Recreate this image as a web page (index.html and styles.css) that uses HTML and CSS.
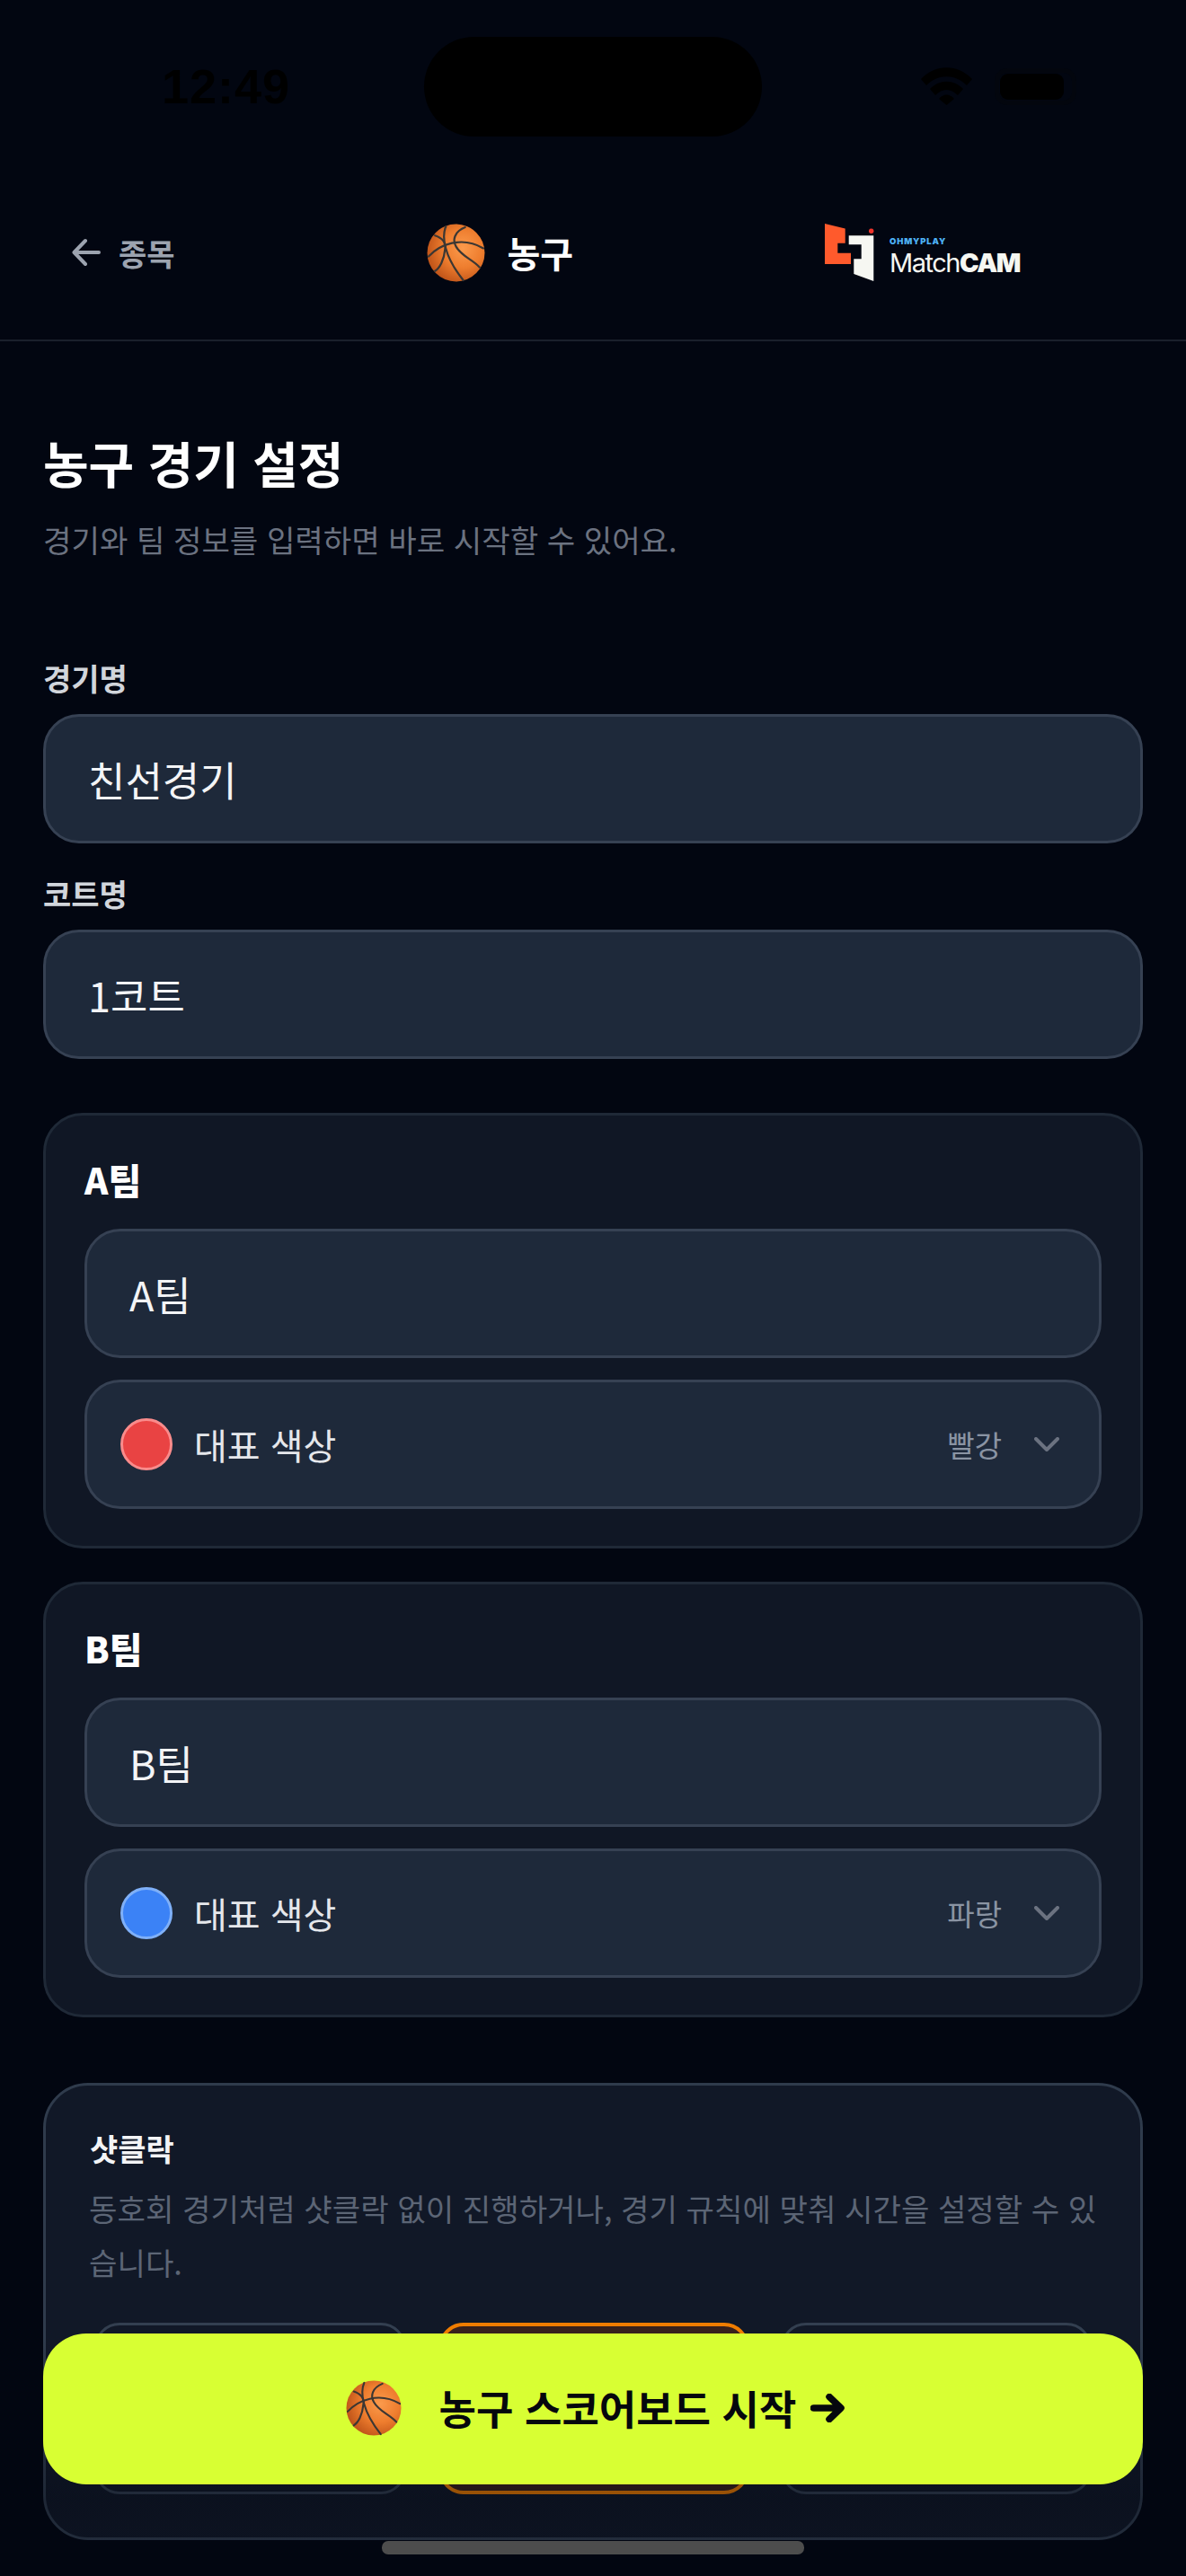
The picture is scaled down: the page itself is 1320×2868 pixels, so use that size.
FILE: index.html
```html
<!DOCTYPE html>
<html lang="ko">
<head>
<meta charset="utf-8">
<title>농구 경기 설정</title>
<link rel="stylesheet" href="styles.css">
</head>
<body>
<svg class="defs" width="0" height="0" aria-hidden="true">
  <defs>
    <radialGradient id="ballFill" cx="62%" cy="42%" r="62%">
      <stop offset="0" stop-color="#fb9a4c"/>
      <stop offset="0.55" stop-color="#ee7d2e"/>
      <stop offset="1" stop-color="#c2561a"/>
    </radialGradient>
    <symbol id="ball" viewBox="0 0 64 64">
      <circle cx="32" cy="32" r="31.5" fill="url(#ballFill)"/>
      <g fill="none" stroke="#3b3733" stroke-width="2.2" stroke-linecap="round">
        <path d="M2 36C14 23 38 13 62 27"/>
        <path d="M21 3C16 14 19 36 40 62"/>
        <path d="M9 13C18 16 21 22 20 28C19 40 14 49 9 52"/>
        <path d="M42 4C30 9 28 18 32 25C38 36 50 39 58 48"/>
      </g>
    </symbol>
  </defs>
</svg>
<div class="phone">
  <div class="status">
    <span class="time">12:49</span>
    <div class="island"></div>
    <div class="status-icons">
      <svg class="wifi" viewBox="0 0 57 42"><path d="M0 13C16-4 41-4 57 13L51 20C38 7 19 7 6 20Z"/><path d="M10 24C21 13 36 13 47 24L41 31C33 23 24 23 16 31Z"/><path d="M20 35C25 29 32 29 37 35L28.5 42Z"/></svg>
      <div class="battery"><div class="battery-fill"></div></div>
    </div>
  </div>
  <header class="topbar">
    <div class="back">
      <svg class="back-icon" viewBox="0 0 32 32"><path d="M30 16H3M15 3 2.500 16 15 29"/></svg>
      <span>종목</span>
    </div>
    <div class="sport">
      <svg class="ball-lg"><use href="#ball"/></svg>
      <span>농구</span>
    </div>
    <div class="logo">
      <svg class="logo-mark" viewBox="0 0 55 64">
        <path fill="#ff5a2c" d="M0 0 22.700 5.500V21.700H14.300V32.700H29V45H0Z"/>
        <path fill="#f6f7f2" d="M26.700 13.300H54.300V64L32.300 56V39.300H40.700V23.300H26.700Z"/>
        <circle cx="51.700" cy="8.300" r="2.700" fill="#f0342b"/>
      </svg>
      <div class="logo-text">
        <span class="logo-top">OHMYPLAY</span>
        <span class="logo-main">Match<b>CAM</b></span>
      </div>
    </div>
  </header>
  <main class="content">
    <section class="intro">
      <h1>농구 경기 설정</h1>
      <p>경기와 팀 정보를 입력하면 바로 시작할 수 있어요.</p>
    </section>
    <section class="fields">
      <label class="field-label">경기명</label>
      <div class="input">친선경기</div>
      <label class="field-label second">코트명</label>
      <div class="input">1코트</div>
    </section>
    <section class="teams">
      <div class="card">
        <h2>A팀</h2>
        <div class="input team-input">A팀</div>
        <div class="input select">
          <span class="swatch red"></span>
          <span class="select-label">대표 색상</span>
          <span class="select-value">빨강</span>
          <svg class="chevron" viewBox="0 0 28 16"><path d="M2 2 14 14 26 2"/></svg>
        </div>
      </div>
      <div class="card">
        <h2>B팀</h2>
        <div class="input team-input">B팀</div>
        <div class="input select">
          <span class="swatch blue"></span>
          <span class="select-label">대표 색상</span>
          <span class="select-value">파랑</span>
          <svg class="chevron" viewBox="0 0 28 16"><path d="M2 2 14 14 26 2"/></svg>
        </div>
      </div>
    </section>
    <section class="card clock">
      <h3>샷클락</h3>
      <p>동호회 경기처럼 샷클락 없이 진행하거나, 경기 규칙에 맞춰 시간을 설정할 수 있습니다.</p>
      <div class="options">
        <div class="option"></div>
        <div class="option active"></div>
        <div class="option"></div>
      </div>
    </section>
  </main>
  <div class="fade"></div>
  <button class="cta">
    <svg class="ball-md"><use href="#ball"/></svg>
    <span>농구 스코어보드 시작</span>
    <svg class="cta-arrow" viewBox="0 0 38 32"><path d="M3.500 16H33M21 3.500 34 16 21 28.500"/></svg>
  </button>
  <div class="home"></div>
</div>
</body>
</html>
```
FILE: styles.css
```css
* { box-sizing: border-box; margin: 0; padding: 0; }
html, body { width: 1320px; height: 2868px; overflow: hidden; background: #020611; }
body { font-family: "Noto Sans CJK KR", "Noto Sans", sans-serif; color: #fff; }
.defs { position: absolute; }
.phone { position: relative; width: 1320px; height: 2868px; overflow: hidden; background: #020611; }

.status { height: 190px; display: grid; grid-template-columns: 1fr 376px 1fr; align-items: start; padding-top: 41px; }
.time { font-family: "Liberation Sans", sans-serif; font-weight: 700; font-size: 54px; line-height: 56px; margin: 27px 0 0 180px; color: #000; letter-spacing: 1px; }
.island { height: 111px; border-radius: 56px; background: #000; }
.status-icons { display: flex; align-items: center; justify-content: flex-end; gap: 25px; margin-top: 34px; padding-right: 122px; }
.wifi { width: 57px; height: 42px; fill: #000; }
.battery { width: 91px; height: 41px; border: 5px solid #03060e; border-radius: 14px; padding: 1px; }
.battery-fill { width: 71px; height: 29px; border-radius: 9px; background: #000; }

.topbar { height: 190px; padding: 0 185px 6px 80px; display: flex; align-items: center; justify-content: space-between; border-bottom: 2px solid #1a202c; }
.back { display: flex; align-items: center; gap: 20px; color: #9ca3af; font-size: 34px; font-weight: 600; }
.back-icon { width: 32px; height: 32px; fill: none; stroke: #9ca3af; stroke-width: 4; stroke-linecap: round; stroke-linejoin: round; }
.sport { display: flex; align-items: center; gap: 25px; font-size: 40px; font-weight: 600; }
.ball-lg { width: 65px; height: 65px; }
.logo { display: flex; align-items: center; gap: 17px; }
.logo-mark { width: 55px; height: 64px; flex: none; }
.logo-text { display: flex; flex-direction: column; font-family: "Inter", sans-serif; margin-top: 12px; }
.logo-top { font-size: 9.500px; line-height: 12px; font-weight: 900; letter-spacing: 0.800px; color: #4db1f5; }
.logo-main { font-size: 29px; line-height: 36px; font-weight: 400; color: #f6f7f2; letter-spacing: -1.500px; }
.logo-main b { font-weight: 900; }

.content { padding: 0 48px; }
.intro { padding-top: 96px; }
h1 { font-size: 55px; line-height: 76px; font-weight: 700; }
.intro p { margin-top: 22px; font-size: 34.200px; line-height: 52px; color: #6b7280; }
.fields { display: flex; flex-direction: column; margin-top: 106px; }
.field-label { font-size: 34px; line-height: 46px; font-weight: 600; color: #d1d5db; margin-bottom: 17px; }
.field-label.second { margin-top: 33px; }
.input { height: 144px; border-radius: 40px; background: #1e293a; border: 3px solid #364153; display: flex; align-items: center; padding: 0 47px; font-size: 45px; color: #f3f4f6; }
.teams { display: flex; flex-direction: column; gap: 37px; margin-top: 60px; }
.card { border-radius: 44px; background: #101725; border: 3px solid #1f2937; padding: 43px 43px 41px; display: flex; flex-direction: column; }
h2 { font-size: 40px; line-height: 56px; font-weight: 800; margin-bottom: 27px; }
.team-input { margin-bottom: 24px; }
.select { padding: 0 44px 0 37px; font-size: 40px; }
.swatch { width: 58px; height: 58px; border-radius: 50%; border: 3px solid; flex: none; }
.swatch.red { background: #e94343; border-color: #f98b8b; }
.swatch.blue { background: #3b82f6; border-color: #7fb0f8; }
.select-label { margin-left: 24px; flex: 1; color: #e5e7eb; }
.select-value { font-size: 33px; color: #8a94a3; }
.chevron { width: 28px; height: 16px; margin-left: 36px; fill: none; stroke: #6b7280; stroke-width: 4; stroke-linecap: round; stroke-linejoin: round; }

.clock { margin-top: 73px; height: 509px; padding: 45px 49px; border-color: #2f3b4c; border-radius: 50px; background: #111827; }
h3 { font-size: 34px; line-height: 50px; font-weight: 700; color: #f3f4f6; }
.clock p { margin: 11px -2px 0 -1px; font-size: 34.200px; line-height: 60px; color: #5c6575; }
.options { display: grid; grid-template-columns: 347px 346px 346px; gap: 35.500px; margin: 38px 5px 0; }
.option { height: 191px; border-radius: 28px; border: 3px solid #333f50; background: #111827; }
.option.active { border: 4px solid #f07d00; background: #38211c; }

.fade { position: absolute; left: 0; right: 0; top: 2600px; height: 268px; background: linear-gradient(to bottom, rgba(2, 6, 17, 0), rgba(2, 6, 17, 0.38) 68%, rgba(2, 6, 17, 0.2)); }
.cta { position: absolute; left: 48px; top: 2598px; width: 1224px; height: 168px; border: none; border-radius: 48px; background: #d8ff33; display: flex; align-items: center; justify-content: center; gap: 42px; color: #05070d; font-family: inherit; font-size: 45px; font-weight: 700; padding: 0 0 3px 5px; }
.cta-arrow { width: 38px; height: 32px; margin-left: -26px; fill: none; stroke: #05070d; stroke-width: 7.500; stroke-linecap: round; stroke-linejoin: round; }
.ball-md { width: 62px; height: 62px; }
.home { position: absolute; left: 425px; top: 2829px; width: 470px; height: 15px; border-radius: 7px; background: #4d4d4d; }
```
